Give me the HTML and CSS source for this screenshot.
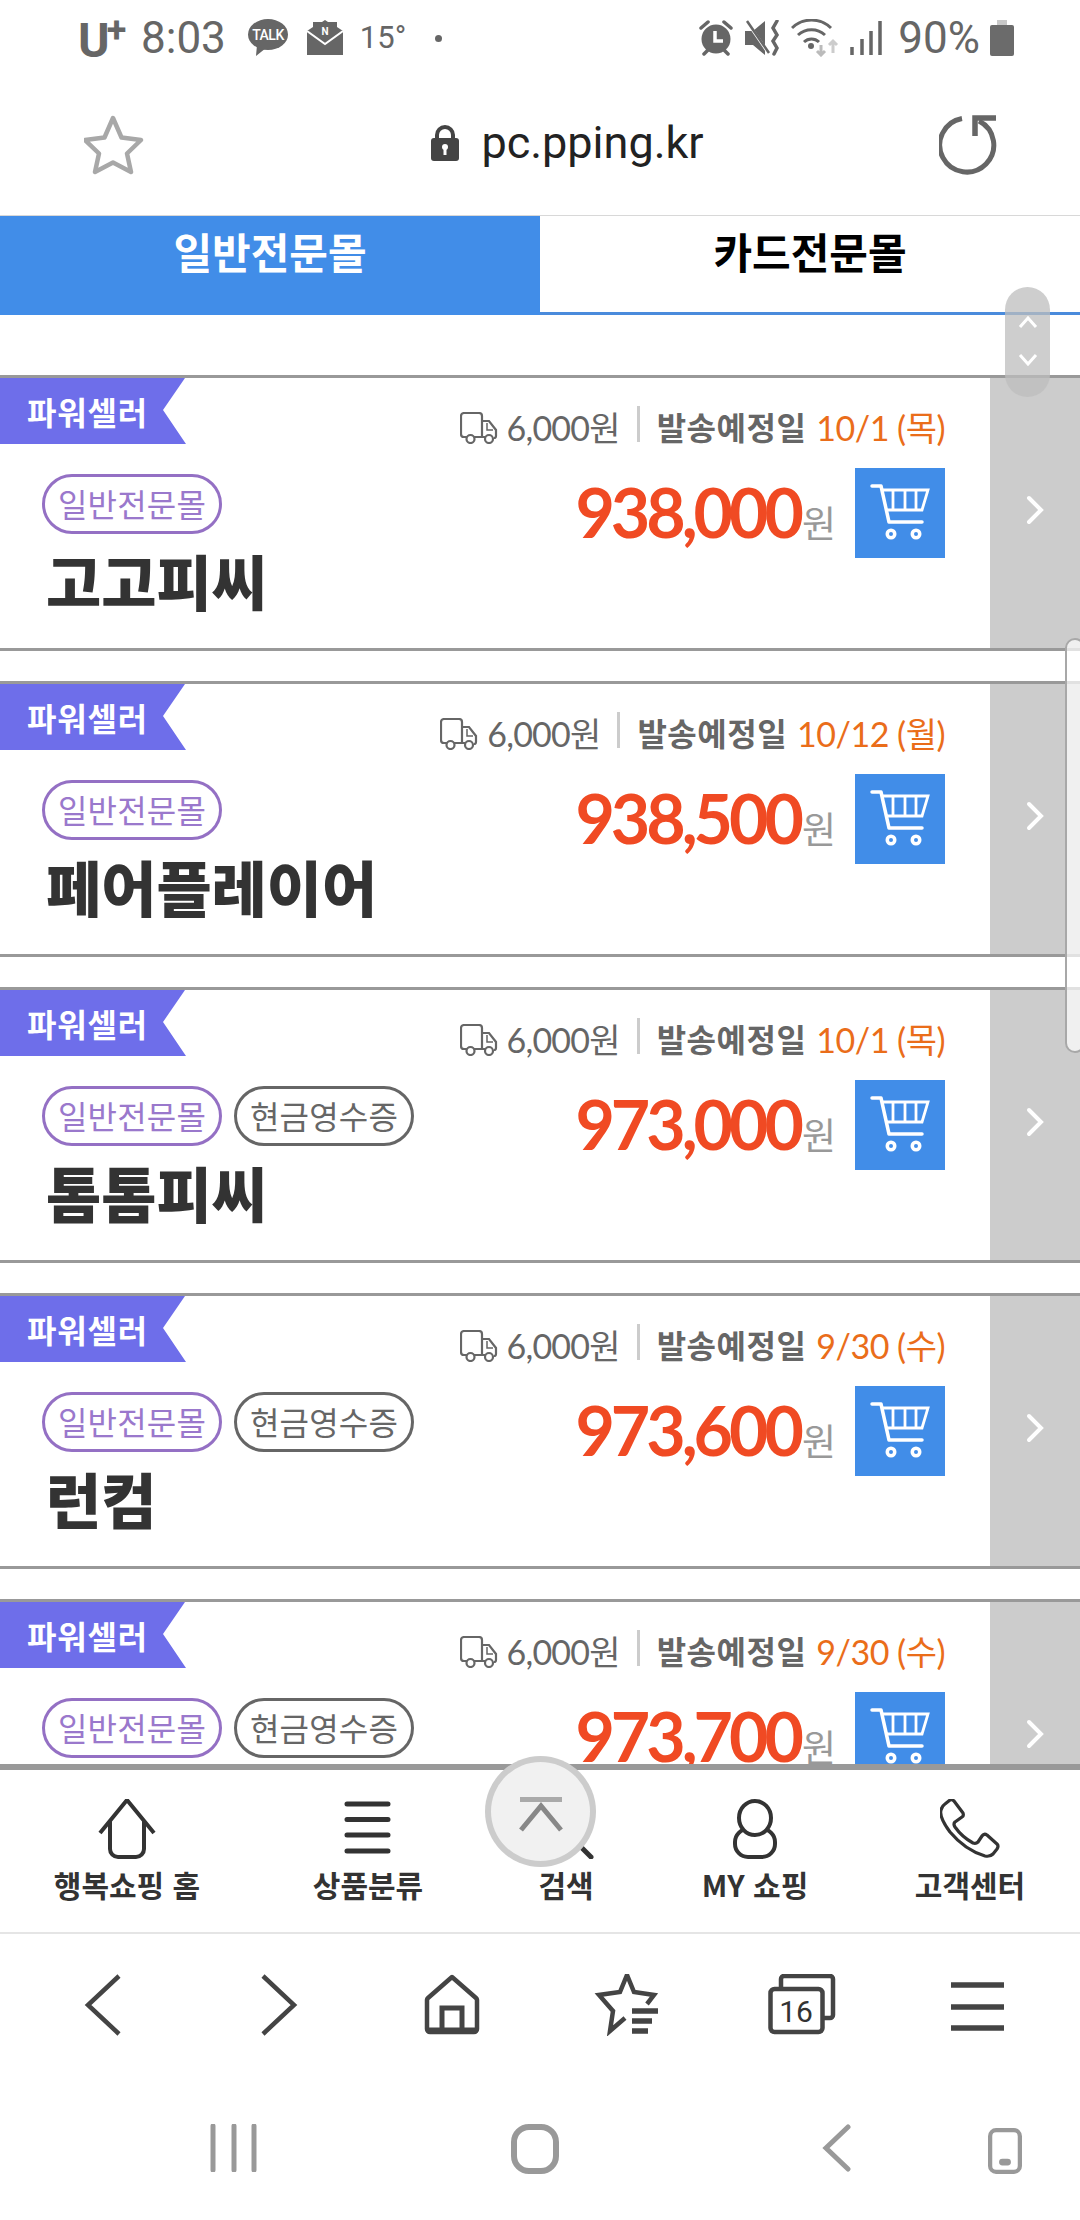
FILE: index.html
```html
<!DOCTYPE html>
<html lang="ko">
<head>
<meta charset="utf-8">
<title>pc.pping.kr</title>
<link rel="stylesheet" href="styles.css">
</head>
<body>
<svg class="defs" width="0" height="0" aria-hidden="true">
  <symbol id="truck" viewBox="0 0 38 32">
    <path d="M7 25H4a3 3 0 0 1-3-3V4a3 3 0 0 1 3-3h15a3 3 0 0 1 3 3v21H14M22 9h7l7 9v6a2 2 0 0 1-2 2M22 25h3" fill="none" stroke="#666" stroke-width="2.2"/>
    <path d="M27 11v7h6" fill="none" stroke="#666" stroke-width="1.5"/>
    <circle cx="10.500" cy="27" r="4" fill="#fff" stroke="#666" stroke-width="2.2"/>
    <circle cx="29" cy="27" r="4" fill="#fff" stroke="#666" stroke-width="2.2"/>
  </symbol>
  <symbol id="cart" viewBox="0 0 90 90">
    <path d="M17 18h9l8 36h33" fill="none" stroke="#fff" stroke-width="3.500" stroke-linecap="round" stroke-linejoin="round"/>
    <path d="M27 22h46l-6 20H31M38 22v20M50 22v20M61 22v20" fill="none" stroke="#fff" stroke-width="2.800"/>
    <circle cx="36" cy="66" r="5.500" fill="#fff"/><circle cx="36" cy="66" r="2" fill="#418de8"/>
    <circle cx="61" cy="66" r="5.500" fill="#fff"/><circle cx="61" cy="66" r="2" fill="#418de8"/>
  </symbol>
  <symbol id="chev" viewBox="0 0 20 30">
    <path d="M3 3l12 12L3 27" fill="none" stroke="#fff" stroke-width="4" stroke-linecap="round" stroke-linejoin="miter"/>
  </symbol>
</svg>

<div class="phone">
  <header class="status">
    <div class="status-group">
      <span class="carrier">U<sup class="plus">+</sup></span>
      <span class="clock">8:03</span>
      <svg class="talk" width="40" height="38" viewBox="0 0 40 38"><ellipse cx="20" cy="15.500" rx="20" ry="15.500" fill="#666"/><path d="M9 26l-1 11 10-8z" fill="#666"/><text x="20" y="21" text-anchor="middle" class="talk-text">TALK</text></svg>
      <svg class="mail" width="36" height="36" viewBox="0 0 36 36"><path d="M0 11l6-4V2h9l3-2 3 2h9v5l6 4v24H0z" fill="#666"/><path d="M0 11l18 13 18-13" fill="none" stroke="#fff" stroke-width="2"/><text x="18" y="15" text-anchor="middle" class="mail-text">N</text></svg>
      <span class="temp">15°</span>
      <span class="dot"></span>
    </div>
    <div class="status-group right">
      <svg width="38" height="36" viewBox="0 0 38 36"><circle cx="19" cy="19" r="14.500" fill="#666"/><path d="M4 8l7-6M34 8l-7-6M7 34l4-4M31 34l-4-4" stroke="#666" stroke-width="3.500" stroke-linecap="round"/><path d="M18 11v10h8" fill="none" stroke="#fff" stroke-width="3.500"/></svg>
      <svg width="36" height="36" viewBox="0 0 36 36"><path d="M0 11h8l12-10v34L8 25H0z" fill="#666"/><path d="M2 2l22 32" stroke="#fff" stroke-width="3"/><path d="M2 1l22 32" stroke="#666" stroke-width="2.500"/><path d="M32 1l-4 7 4 7-4 6 4 7-3 6" fill="none" stroke="#666" stroke-width="3.500" stroke-linecap="round"/></svg>
      <svg width="48" height="38" viewBox="0 0 48 38"><path d="M1 9a28 28 0 0 1 39 0M7 16a20 20 0 0 1 27 0M13 23a11 11 0 0 1 15 0" fill="none" stroke="#666" stroke-width="3"/><circle cx="20" cy="27" r="3" fill="#666"/><path d="M30 26v10m-4-4l4 4 4-4" fill="none" stroke="#bbb" stroke-width="3"/><path d="M42 34V22m-4 4l4-4 4 4" fill="none" stroke="#ccc" stroke-width="3"/></svg>
      <svg class="signal" width="32" height="34" viewBox="0 0 32 34"><path d="M2 26v8M12 18v16M21 10v24M30 0v34" stroke="#666" stroke-width="3.500"/></svg>
      <span class="clock pct">90%</span>
      <svg class="batt" width="24" height="36" viewBox="0 0 24 36"><path d="M7 0h10v6H7z" fill="#c8c8c8"/><rect y="5" width="24" height="31" rx="2" fill="#6b6b6b"/></svg>
    </div>
  </header>

  <div class="urlbar">
    <svg class="url-star" width="60" height="60" viewBox="0 0 60 60"><path d="M29 3l8.500 19.500L57 25 43 38.500 47 57 29 47.500 11 57l4-18.500L1 25l19.500-2.500z" fill="none" stroke="#a8a8a8" stroke-width="4.500" stroke-linejoin="round"/></svg>
    <div class="url">
      <svg width="28" height="36" viewBox="0 0 28 36"><path d="M6 15V10a8 8 0 0 1 16 0v5" fill="none" stroke="#444" stroke-width="4"/><rect y="13" width="28" height="23" rx="3" fill="#444"/><circle cx="14" cy="22" r="3" fill="#fff"/><path d="M14 22v8" stroke="#fff" stroke-width="3"/></svg>
      <span class="url-text">pc.pping.kr</span>
    </div>
    <svg class="url-reload" width="62" height="60" viewBox="0 0 62 60"><path d="M23 3.500A27 27 0 1 0 40 6" fill="none" stroke="#666" stroke-width="5"/><path d="M36 21V3h21" fill="none" stroke="#666" stroke-width="5.500"/></svg>
  </div>

  <nav class="tabs">
    <div class="tab active">일반전문몰</div>
    <div class="tab">카드전문몰</div>
  </nav>

  <main class="list">
    <article class="card">
      <div class="card-main">
        <div class="row-top">
          <span class="badge">파워셀러</span>
          <div class="ship">
            <svg class="truck"><use href="#truck"/></svg>
            <span class="fee">6,000원</span>
            <i class="sep"></i>
            <b class="ship-label">발송예정일</b>
            <span class="date">10/1 (목)</span>
          </div>
        </div>
        <div class="row-body">
          <div class="info">
            <div class="chips"><span class="chip purple">일반전문몰</span></div>
            <h2 class="name">고고피씨</h2>
          </div>
          <div class="buy">
            <div class="price"><strong>938,000</strong><span>원</span></div>
            <div class="cart"><svg width="90" height="90"><use href="#cart"/></svg></div>
          </div>
        </div>
      </div>
      <div class="card-go"><svg class="go" width="20" height="30"><use href="#chev"/></svg></div>
    </article>

    <article class="card">
      <div class="card-main">
        <div class="row-top">
          <span class="badge">파워셀러</span>
          <div class="ship">
            <svg class="truck"><use href="#truck"/></svg>
            <span class="fee">6,000원</span>
            <i class="sep"></i>
            <b class="ship-label">발송예정일</b>
            <span class="date">10/12 (월)</span>
          </div>
        </div>
        <div class="row-body">
          <div class="info">
            <div class="chips"><span class="chip purple">일반전문몰</span></div>
            <h2 class="name">페어플레이어</h2>
          </div>
          <div class="buy">
            <div class="price"><strong>938,500</strong><span>원</span></div>
            <div class="cart"><svg width="90" height="90"><use href="#cart"/></svg></div>
          </div>
        </div>
      </div>
      <div class="card-go"><svg class="go" width="20" height="30"><use href="#chev"/></svg></div>
    </article>

    <article class="card">
      <div class="card-main">
        <div class="row-top">
          <span class="badge">파워셀러</span>
          <div class="ship">
            <svg class="truck"><use href="#truck"/></svg>
            <span class="fee">6,000원</span>
            <i class="sep"></i>
            <b class="ship-label">발송예정일</b>
            <span class="date">10/1 (목)</span>
          </div>
        </div>
        <div class="row-body">
          <div class="info">
            <div class="chips"><span class="chip purple">일반전문몰</span><span class="chip gray">현금영수증</span></div>
            <h2 class="name">톰톰피씨</h2>
          </div>
          <div class="buy">
            <div class="price"><strong>973,000</strong><span>원</span></div>
            <div class="cart"><svg width="90" height="90"><use href="#cart"/></svg></div>
          </div>
        </div>
      </div>
      <div class="card-go"><svg class="go" width="20" height="30"><use href="#chev"/></svg></div>
    </article>

    <article class="card">
      <div class="card-main">
        <div class="row-top">
          <span class="badge">파워셀러</span>
          <div class="ship">
            <svg class="truck"><use href="#truck"/></svg>
            <span class="fee">6,000원</span>
            <i class="sep"></i>
            <b class="ship-label">발송예정일</b>
            <span class="date">9/30 (수)</span>
          </div>
        </div>
        <div class="row-body">
          <div class="info">
            <div class="chips"><span class="chip purple">일반전문몰</span><span class="chip gray">현금영수증</span></div>
            <h2 class="name">런컴</h2>
          </div>
          <div class="buy">
            <div class="price"><strong>973,600</strong><span>원</span></div>
            <div class="cart"><svg width="90" height="90"><use href="#cart"/></svg></div>
          </div>
        </div>
      </div>
      <div class="card-go"><svg class="go" width="20" height="30"><use href="#chev"/></svg></div>
    </article>

    <article class="card">
      <div class="card-main">
        <div class="row-top">
          <span class="badge">파워셀러</span>
          <div class="ship">
            <svg class="truck"><use href="#truck"/></svg>
            <span class="fee">6,000원</span>
            <i class="sep"></i>
            <b class="ship-label">발송예정일</b>
            <span class="date">9/30 (수)</span>
          </div>
        </div>
        <div class="row-body">
          <div class="info">
            <div class="chips"><span class="chip purple">일반전문몰</span><span class="chip gray">현금영수증</span></div>
          </div>
          <div class="buy">
            <div class="price"><strong>973,700</strong><span>원</span></div>
            <div class="cart"><svg width="90" height="90"><use href="#cart"/></svg></div>
          </div>
        </div>
      </div>
      <div class="card-go"><svg class="go" width="20" height="30"><use href="#chev"/></svg></div>
    </article>
  </main>

  <nav class="site-nav">
    <div class="site-item">
      <svg class="site-icon" viewBox="0 0 60 60"><path d="M3 34L30 1l27 33M13 22v28a8 8 0 0 0 8 8h18a8 8 0 0 0 8-8V22" fill="none" stroke="#333" stroke-width="4"/></svg>
      <span>행복쇼핑 홈</span>
    </div>
    <div class="site-item">
      <svg class="site-icon" viewBox="0 0 60 60"><path d="M9 5h41M9 20.500h41M9 36h41M9 52h41" stroke="#333" stroke-width="5" stroke-linecap="round"/></svg>
      <span>상품분류</span>
    </div>
    <div class="site-item">
      <svg class="site-icon" viewBox="0 0 60 60"><circle cx="28" cy="25" r="21" fill="none" stroke="#333" stroke-width="4.500"/><path d="M43 46l12 12" stroke="#333" stroke-width="5" stroke-linecap="round"/></svg>
      <span>검색</span>
    </div>
    <div class="site-item">
      <svg class="site-icon" viewBox="0 0 60 60"><rect x="10" y="30" width="40" height="28" rx="13" fill="none" stroke="#333" stroke-width="4"/><ellipse cx="30" cy="19" rx="16" ry="17" fill="#fff" stroke="#333" stroke-width="4"/></svg>
      <span>MY 쇼핑</span>
    </div>
    <div class="site-item">
      <svg class="site-icon" viewBox="0 0 60 60"><path d="M10 1q2-1 4 1l9 12q1 3-1 4l-7 5q-2 2 0 5 7 10 18 16 3 1 5-1l4-6q2-3 5-1l10 9q2 2 0 5l-4 5q-3 3-8 2-20-6-35-24Q-1 18 1 11q1-4 4-6z" fill="none" stroke="#333" stroke-width="3.200" stroke-linejoin="round"/></svg>
      <span>고객센터</span>
    </div>
  </nav>

  <div class="toolbar">
    <div class="tool"><svg width="60" height="62" viewBox="0 0 60 62"><path d="M47 2L16 31l31 29" fill="none" stroke="#444" stroke-width="4.500"/></svg></div>
    <div class="tool"><svg width="60" height="62" viewBox="0 0 60 62"><path d="M16 2l31 29-31 29" fill="none" stroke="#444" stroke-width="4.500"/></svg></div>
    <div class="tool"><svg width="60" height="62" viewBox="0 0 60 62"><path d="M30 3L6 24a3 3 0 0 0-1 2v29a3 3 0 0 0 3 3h44a3 3 0 0 0 3-3V26a3 3 0 0 0-1-2z" fill="none" stroke="#444" stroke-width="4.500" stroke-linejoin="round"/><path d="M20 58V34h20v24" fill="none" stroke="#444" stroke-width="5"/><path d="M5 56h50" stroke="#444" stroke-width="5"/></svg></div>
    <div class="tool"><svg width="66" height="62" viewBox="0 0 66 62"><path d="M31 44L16 57l3-20L5 21l21-3 7-17 7 17 20 3-7 9" fill="none" stroke="#444" stroke-width="4.500"/><path d="M38 37h26M38 47h20M38 57h16" stroke="#444" stroke-width="5.500"/></svg></div>
    <div class="tool"><svg width="68" height="62" viewBox="0 0 68 62"><path d="M13 13V5a3 3 0 0 1 3-3h46a3 3 0 0 1 3 3v36a3 3 0 0 1-3 3h-6" fill="none" stroke="#444" stroke-width="4.500"/><rect x="2.500" y="15" width="52" height="43" rx="4" fill="#fff" stroke="#444" stroke-width="4.500"/><text x="28" y="48" text-anchor="middle" class="tab-count">16</text></svg></div>
    <div class="tool"><svg width="60" height="62" viewBox="0 0 60 62"><path d="M4 11h53M4 33h53M4 54h53" stroke="#444" stroke-width="5.500"/></svg></div>
  </div>

  <div class="sysnav">
    <div class="sys"><svg width="48" height="48" viewBox="0 0 48 48"><path d="M4 2v44M25 2v44M45 2v44" stroke="#999" stroke-width="5" stroke-linecap="round"/></svg></div>
    <div class="sys"><svg width="48" height="50" viewBox="0 0 48 50"><rect x="3" y="3" width="42" height="44" rx="15" fill="none" stroke="#999" stroke-width="6"/></svg></div>
    <div class="sys"><svg width="30" height="48" viewBox="0 0 30 48"><path d="M26 3L4 24l22 21" fill="none" stroke="#999" stroke-width="5" stroke-linecap="round"/></svg></div>
    <div class="sys"><svg width="40" height="54" viewBox="0 0 40 54"><rect x="2.500" y="2.500" width="35" height="49" rx="7" fill="none" stroke="#999" stroke-width="5"/><rect x="13" y="36" width="14" height="8" rx="4" fill="#999"/></svg></div>
  </div>

  <div class="to-top">
    <svg width="44" height="36" viewBox="0 0 44 36"><path d="M1 3.500h42" stroke="#aaa" stroke-width="5"/><path d="M2 34l20-24 20 24" fill="none" stroke="#888" stroke-width="5"/></svg>
  </div>
  <div class="scroller">
    <svg width="20" height="12" viewBox="0 0 20 12"><path d="M2 11l8-9 8 9" fill="none" stroke="#fff" stroke-width="3"/></svg>
    <svg width="20" height="12" viewBox="0 0 20 12"><path d="M2 1l8 9 8-9" fill="none" stroke="#fff" stroke-width="3"/></svg>
  </div>
  <div class="edge-panel"></div>
</div>
</body>
</html>
```

FILE: styles.css
```css
* { box-sizing: border-box; }
html, body { margin: 0; padding: 0; background: #fff; }
body { font-family: "Noto Sans CJK KR", "Noto Sans", sans-serif; }
.defs { position: absolute; }
svg { display: block; }

.phone {
  position: relative;
  width: 1080px;
  height: 2220px;
  overflow: hidden;
  display: flex;
  flex-direction: column;
  background: #fff;
}

/* status bar */
.status {
  height: 70px;
  flex: none;
  padding: 18px 66px 0 78px;
  display: flex;
  justify-content: space-between;
  align-items: flex-start;
  color: #666;
  font-family: Roboto, sans-serif;
}
.status-group { display: flex; align-items: center; height: 40px; }
.status-group.right { gap: 10px; }
.carrier { font-size: 48px; font-weight: 700; line-height: 40px; width: 47px; margin-top: 5px; white-space: nowrap; letter-spacing: -1px; }
.plus { font-size: 36px; line-height: 0; vertical-align: 15px; margin-left: -2px; }
.clock { font-size: 44px; line-height: 40px; margin-left: 16px; }
.pct { margin-left: 6px; }
.talk { margin-left: 22px; }
.talk-text { font: 500 14px Roboto, sans-serif; fill: #fff; letter-spacing: -0.500px; }
.mail { margin-left: 19px; }
.mail-text { font: 700 10px Roboto, sans-serif; fill: #fff; }
.temp { font-size: 31px; margin-left: 17px; line-height: 40px; }
.dot { width: 7px; height: 7px; border-radius: 50%; background: #666; margin-left: 29px; }
.signal { margin-left: 1px; }

/* url bar */
.urlbar {
  height: 145px;
  flex: none;
  position: relative;
  display: flex;
  align-items: center;
  justify-content: space-between;
  padding: 0 79px 0 84px;
}
.url { display: flex; align-items: center; gap: 22px; margin-left: 52px; }
.url-text { font: 400 45px/60px Roboto, sans-serif; color: #222; }
.url-star { margin-top: 4px; }
.url-reload { margin-top: 4px; }

/* tabs */
.tabs {
  flex: none;
  height: 100px;
  display: grid;
  grid-template-columns: 540px 540px;
  border-top: 1px solid #d8d8d8;
}
.tab {
  font-size: 42px;
  font-weight: 700;
  letter-spacing: 0;
  line-height: 56px;
  padding-top: 7px;
  text-align: center;
  color: #000;
  border-bottom: 3px solid #4a8bdc;
}
.tab.active { background: #418de8; color: #fff; border-bottom-color: #418de8; }

/* list */
.list {
  flex: 1;
  min-height: 0;
  overflow: hidden;
  padding-top: 60px;
}
.card {
  height: 276px;
  margin-bottom: 30px;
  border-top: 3px solid #999;
  border-bottom: 3px solid #999;
  display: flex;
}
.card-main { flex: 1; min-width: 0; padding-right: 45px; }
.card-go {
  flex: none;
  width: 90px;
  background: #ccc;
  display: flex;
  align-items: center;
  padding: 0 0 6px 36px;
}
.row-top { display: flex; justify-content: space-between; height: 66px; }
.badge {
  width: 186px;
  height: 66px;
  background: #6e6eea;
  color: #fff;
  font-size: 32px;
  font-weight: 700;
  line-height: 66px;
  padding-left: 27px;
  letter-spacing: 0.800px;
  clip-path: polygon(0 0, 185px 0, 163px 32px, 186px 66px, 0 66px);
}
.ship { display: flex; align-items: center; padding-top: 33px; color: #666; font-family: Lato, "Noto Sans CJK KR", sans-serif; }
.truck { width: 38px; height: 32px; margin-right: 9px; }
.fee { font-size: 34px; letter-spacing: -0.800px; line-height: 40px; }
.sep { width: 3px; height: 36px; background: #ccc; margin: -8px 17px 0 17px; }
.ship-label { font-size: 32px; font-weight: 700; letter-spacing: 0.500px; line-height: 40px; color: #666; }
.date { font-size: 34px; letter-spacing: -0.500px; line-height: 40px; color: #ea6d1a; margin-left: 10px; }

.row-body { display: flex; justify-content: space-between; margin-top: 24px; }
.info { padding: 6px 0 0 42px; }
.chips { display: flex; gap: 12px; }
.chip {
  width: 180px;
  height: 60px;
  border: 3px solid;
  border-radius: 30px;
  font-size: 32px;
  line-height: 52px;
  text-align: center;
  letter-spacing: 0.200px;
}
.chip.purple { border-color: #9470c4; color: #9a78cc; }
.chip.gray { border-color: #666; color: #666; }
.name {
  margin: 9px 0 0 4px;
  font-size: 60px;
  font-weight: 900;
  line-height: 74px;
  letter-spacing: 0;
  color: #333;
  white-space: nowrap;
}
.buy { display: flex; align-items: flex-start; gap: 19px; }
.price { display: flex; align-items: baseline; margin-top: 4px; line-height: 80px; font-family: Lato, "Noto Sans CJK KR", sans-serif; }
.price strong { font-size: 68px; font-weight: 700; letter-spacing: -4px; color: #f04a23; }
.price span { font-size: 37px; color: #999; margin-left: 2px; letter-spacing: 0; }
.cart { width: 90px; height: 90px; background: #418de8; }

/* site nav */
.site-nav {
  flex: none;
  height: 170px;
  border-top: 6px solid #999;
  border-bottom: 2px solid #e5e5e5;
  display: grid;
  grid-template-columns: 254px 228px 168px 210px 220px;
  padding-top: 29px;
}
.site-item { display: flex; flex-direction: column; align-items: center; }
.site-icon { width: 60px; height: 60px; }
.site-item span {
  margin-top: 5px;
  font-size: 30px;
  font-weight: 700;
  line-height: 40px;
  letter-spacing: 0;
  color: #333;
  white-space: nowrap;
}

/* browser toolbar */
.toolbar {
  flex: none;
  height: 152px;
  padding: 40px 0 0 14px;
  display: grid;
  grid-template-columns: repeat(6, 175px);
  align-items: start;
}
.tool { display: flex; justify-content: center; }
.tab-count { font: 400 30px Roboto, sans-serif; fill: #333; }

/* system nav */
.sysnav {
  flex: none;
  height: 134px;
  padding: 38px 0 0 82px;
  display: grid;
  grid-template-columns: 302px 302px 302px 34px;
  align-items: start;
}
.sys { display: flex; justify-content: center; }

/* floating controls */
.to-top {
  position: absolute;
  left: 485px;
  top: 1756px;
  width: 111px;
  height: 111px;
  border-radius: 50%;
  border: 6px solid rgba(200, 200, 200, 0.9);
  background: #f1f1f1;
  display: flex;
  justify-content: center;
  padding-top: 34px;
}
.scroller {
  position: absolute;
  left: 1005px;
  top: 287px;
  width: 45px;
  height: 110px;
  border-radius: 23px;
  background: rgba(190, 190, 190, 0.75);
  display: flex;
  flex-direction: column;
  align-items: center;
  gap: 26px;
  padding-top: 29px;
}
.edge-panel {
  position: absolute;
  left: 1065px;
  top: 638px;
  width: 20px;
  height: 415px;
  border: 2px solid #a8a8a8;
  border-radius: 20px;
  background: rgba(255, 255, 255, 0.7);
}
```
